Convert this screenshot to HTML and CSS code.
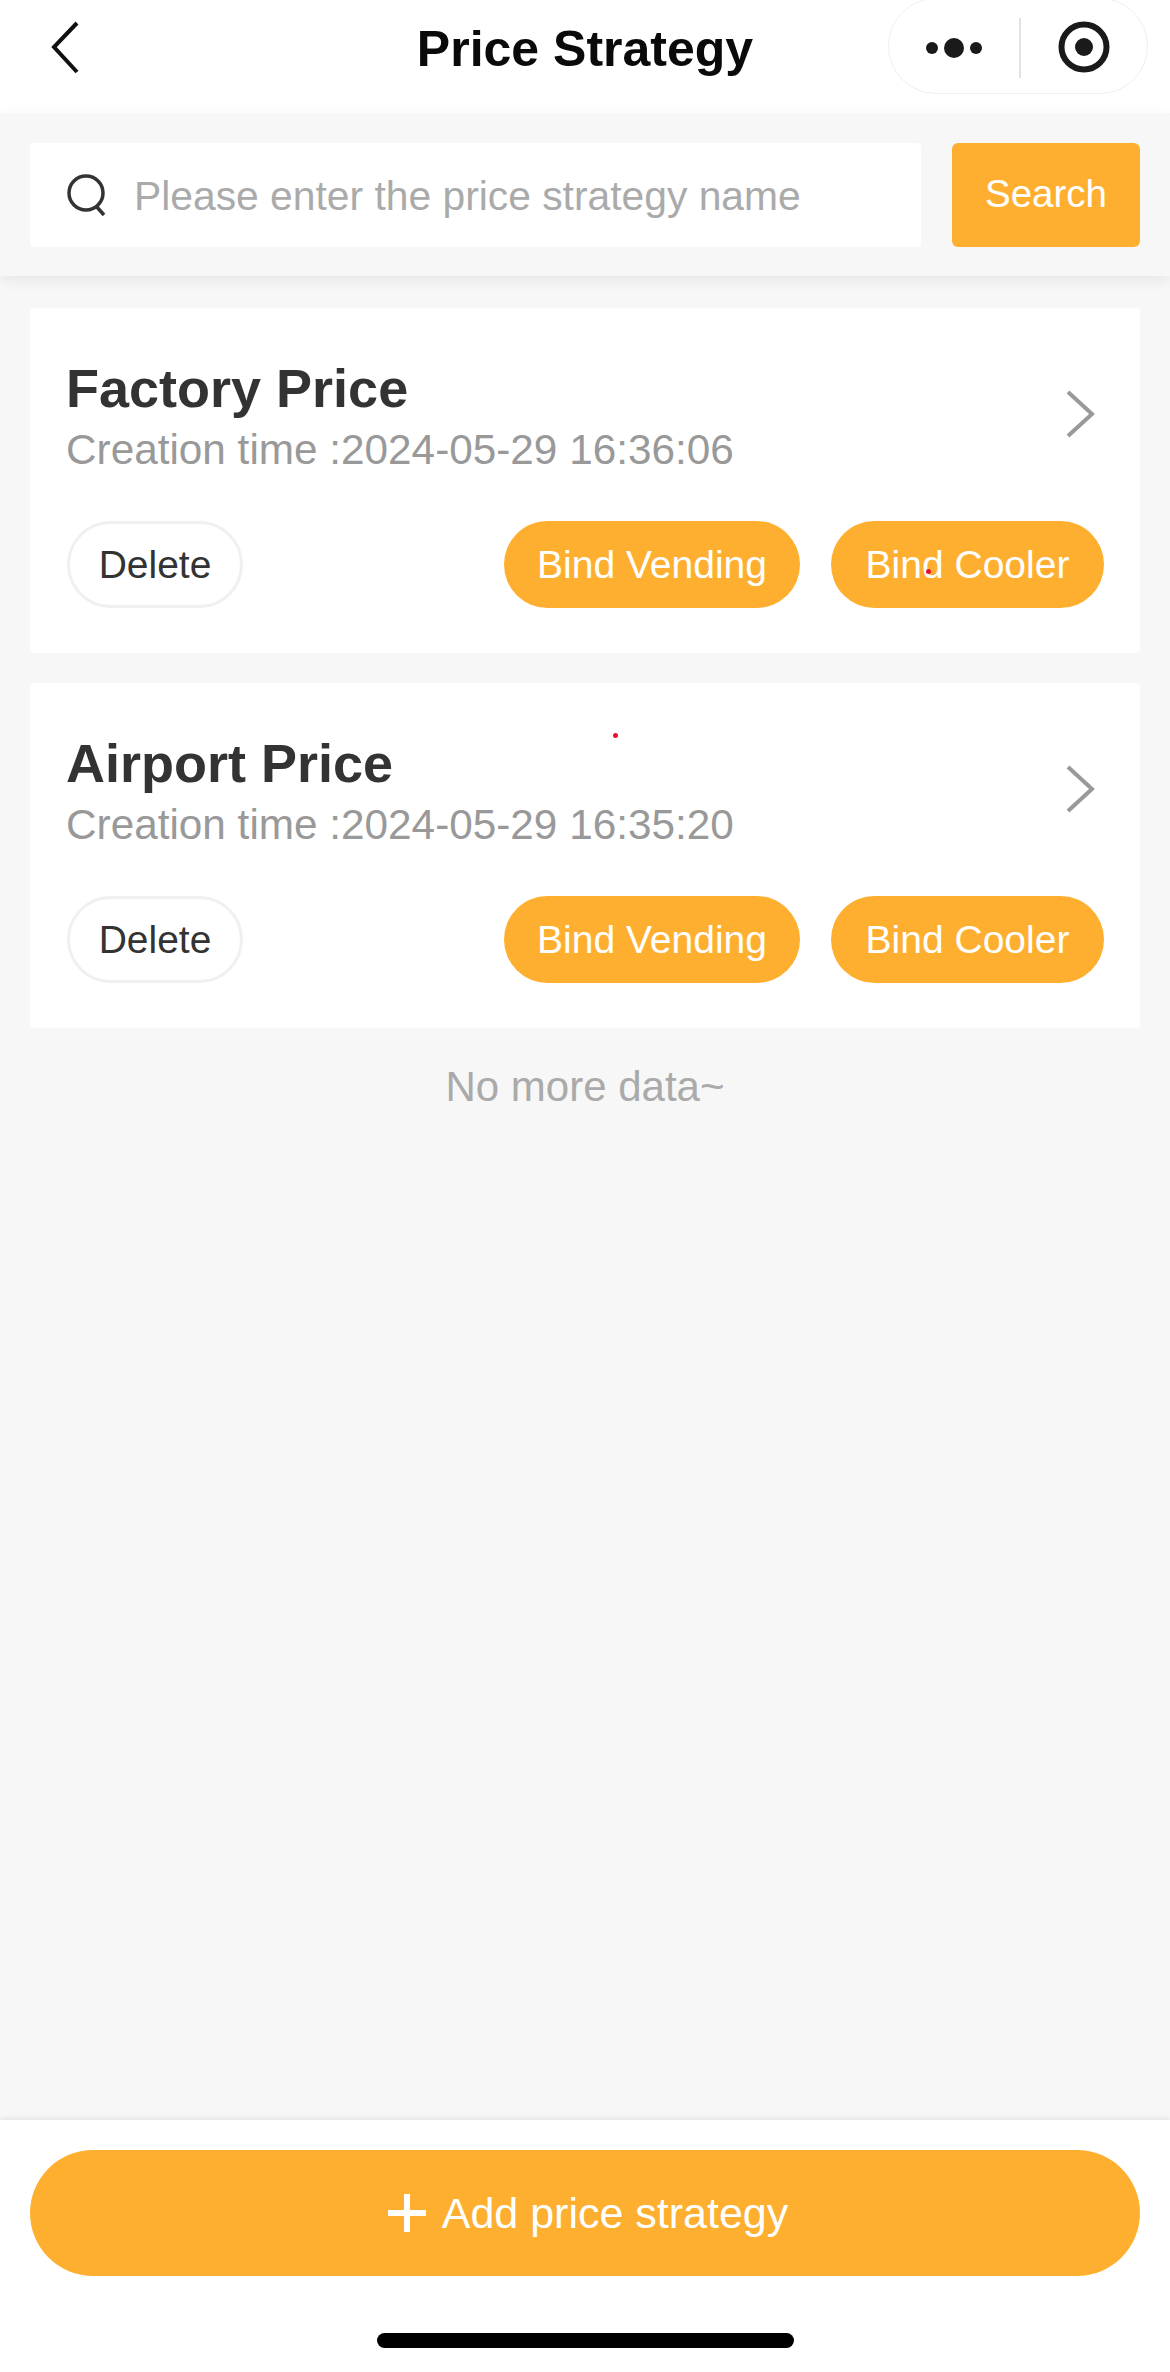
FILE: index.html
```html
<!DOCTYPE html>
<html lang="en">
<head>
  <meta charset="UTF-8" />
  <title>Price Strategy</title>
  <link rel="stylesheet" href="styles.css">
</head>
<body>
  <div class="page">
    <header class="navbar">
      <svg class="back" width="34" height="60" viewBox="0 0 34 60">
        <path d="M31 5 L8 29 L31 54" fill="none" stroke="#111" stroke-width="4"/>
      </svg>
      <div class="nav-title">Price Strategy</div>
      <div class="capsule">
        <svg class="capsule-more" width="60" height="20" viewBox="0 0 60 20">
          <circle cx="6" cy="10" r="6" fill="#1a1a1a"/>
          <circle cx="28" cy="10" r="10" fill="#1a1a1a"/>
          <circle cx="50" cy="10" r="6" fill="#1a1a1a"/>
        </svg>
        <span class="capsule-line"></span>
        <svg class="capsule-close" width="52" height="52" viewBox="0 0 52 52">
          <circle cx="26" cy="26" r="22.500" fill="none" stroke="#1a1a1a" stroke-width="6"/>
          <circle cx="26" cy="26" r="9" fill="#1a1a1a"/>
        </svg>
      </div>
    </header>

    <div class="search-row">
      <div class="search-box">
        <svg width="42" height="44" viewBox="0 0 42 44">
          <circle cx="20" cy="20" r="17" fill="none" stroke="#333" stroke-width="3.500"/>
          <path d="M30 33 L38 42" fill="none" stroke="#333" stroke-width="3.500"/>
        </svg>
        <span class="placeholder">Please enter the price strategy name</span>
      </div>
      <div class="search-btn">Search</div>
    </div>

    <main class="list">
      <section class="card">
        <div class="card-top">
          <div>
            <div class="card-name">Factory Price</div>
            <div class="card-time">Creation time :2024-05-29 16:36:06</div>
          </div>
          <svg class="arrow" width="30" height="48" viewBox="0 0 30 48">
            <path d="M3 2 L27 24 L3 46" fill="none" stroke="#999" stroke-width="4"/>
          </svg>
        </div>
        <div class="card-actions">
          <div class="pill pill-plain">Delete</div>
          <div class="pill pill-vending">Bind Vending</div>
          <div class="pill pill-cooler">Bind Cooler</div>
        </div>
      </section>

      <section class="card">
        <div class="card-top">
          <div>
            <div class="card-name">Airport Price</div>
            <div class="card-time">Creation time :2024-05-29 16:35:20</div>
          </div>
          <svg class="arrow" width="30" height="48" viewBox="0 0 30 48">
            <path d="M3 2 L27 24 L3 46" fill="none" stroke="#999" stroke-width="4"/>
          </svg>
        </div>
        <div class="card-actions">
          <div class="pill pill-plain">Delete</div>
          <div class="pill pill-vending">Bind Vending</div>
          <div class="pill pill-cooler">Bind Cooler</div>
        </div>
      </section>

      <div class="no-more">No more data~</div>
    </main>

    <footer class="bottom">
      <div class="add-btn">
        <svg width="38" height="38" viewBox="0 0 38 38">
          <path d="M19 0 V38 M0 19 H38" fill="none" stroke="#fff" stroke-width="6"/>
        </svg>
        <span>Add price strategy</span>
      </div>
      <div class="home-bar"></div>
    </footer>

    <span class="dot dot-one"></span>
    <span class="dot dot-two"></span>
  </div>
</body>
</html>
```

FILE: styles.css
```css
html, body {
  margin: 0;
  padding: 0;
}
body {
  font-family: "Liberation Sans", Arial, sans-serif;
  background: #f7f7f7;
  color: #333;
}
.page {
  position: relative;
  width: 1170px;
  height: 2372px;
  display: flex;
  flex-direction: column;
  overflow: hidden;
}

/* top bar */
.navbar {
  position: relative;
  height: 113px;
  flex-shrink: 0;
  background: #fff;
  display: flex;
  align-items: center;
  justify-content: center;
}
.nav-title {
  font-size: 50px;
  font-weight: bold;
  color: #0a0a0a;
  margin-top: -16px;
}
.back {
  position: absolute;
  left: 46px;
  top: 18px;
}
.capsule {
  position: absolute;
  left: 888px;
  top: -2px;
  width: 260px;
  height: 96px;
  box-sizing: border-box;
  border: 1px solid #efefef;
  border-radius: 48px;
  background: #fff;
}
.capsule-more {
  position: absolute;
  left: 37px;
  top: 39px;
}
.capsule-line {
  position: absolute;
  left: 130px;
  top: 19px;
  width: 2px;
  height: 60px;
  background: #e3e3e3;
}
.capsule-close {
  position: absolute;
  left: 169px;
  top: 22px;
}

/* search */
.search-row {
  height: 163px;
  flex-shrink: 0;
  box-sizing: border-box;
  padding: 30px;
  display: flex;
  gap: 31px;
  background: #f7f7f7;
  box-shadow: 0 4px 14px rgba(0,0,0,0.07);
  position: relative;
}
.search-box {
  width: 891px;
  height: 104px;
  box-sizing: border-box;
  padding-left: 36px;
  background: #fff;
  border-radius: 4px;
  display: flex;
  align-items: center;
  gap: 26px;
}
.placeholder {
  font-size: 40.800px;
  color: #aaa;
  margin-top: 2px;
}
.search-btn {
  width: 188px;
  height: 104px;
  background: #ffaf30;
  border-radius: 6px;
  color: #fff;
  font-size: 38.500px;
  display: flex;
  align-items: center;
  justify-content: center;
  padding-bottom: 2px;
  box-sizing: border-box;
}

/* cards */
.list {
  flex: 1;
  padding: 32px 30px 0;
}
.card {
  height: 345px;
  box-sizing: border-box;
  margin-bottom: 30px;
  padding: 50px 36px 0 37px;
  background: #fff;
  border-radius: 4px;
}
.card-top {
  display: flex;
  justify-content: space-between;
  align-items: flex-start;
  height: 163px;
}
.card-name {
  font-size: 54px;
  font-weight: bold;
  line-height: 60px;
  color: #333;
  margin-left: -1px;
}
.card-time {
  font-size: 42.300px;
  line-height: 46px;
  color: #999;
  margin-top: 9px;
  margin-left: -1px;
}
.arrow {
  margin-top: 32px;
  margin-right: 9px;
}
.card-actions {
  display: flex;
  align-items: center;
  gap: 31px;
}
.pill {
  height: 87px;
  box-sizing: border-box;
  border-radius: 44px;
  font-size: 39px;
  display: flex;
  align-items: center;
  justify-content: center;
}
.pill-plain {
  width: 176px;
  margin-right: auto;
  background: #fff;
  border: 3px solid #f0f0f0;
  color: #333;
}
.pill-vending {
  width: 296px;
  background: #ffaf30;
  color: #fff;
}
.pill-cooler {
  width: 273px;
  background: #ffaf30;
  color: #fff;
}
.no-more {
  padding-top: 4px;
  text-align: center;
  font-size: 42px;
  line-height: 50px;
  color: #aaa;
}

/* bottom */
.bottom {
  height: 252px;
  flex-shrink: 0;
  box-sizing: border-box;
  padding: 30px 30px 0;
  background: #fff;
  box-shadow: 0 -1px 6px rgba(0,0,0,0.1);
  position: relative;
}
.add-btn {
  height: 126px;
  border-radius: 63px;
  background: #ffaf30;
  color: #fff;
  font-size: 43px;
  display: flex;
  align-items: center;
  justify-content: center;
  gap: 16px;
  padding-left: 6px;
}
.home-bar {
  width: 417px;
  height: 15px;
  margin: 57px auto 0;
  border-radius: 8px;
  background: #000;
}

/* stray marks in the capture */
.dot {
  position: absolute;
  width: 5px;
  height: 5px;
  border-radius: 50%;
  background: #e8102a;
}
.dot-one {
  left: 926px;
  top: 569px;
}
.dot-two {
  left: 613px;
  top: 733px;
}
```
